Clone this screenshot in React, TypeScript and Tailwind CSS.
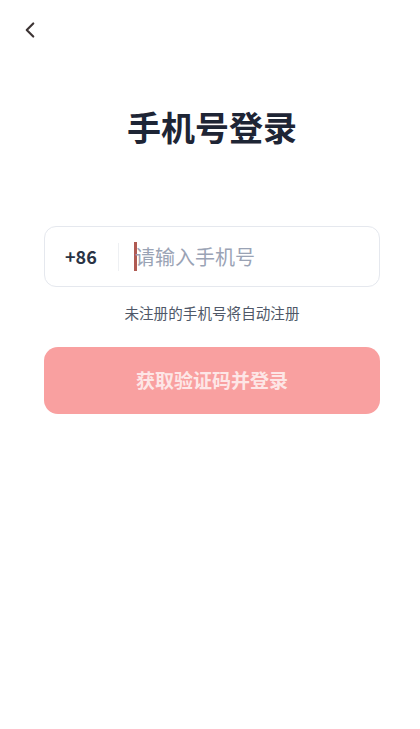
import { ChevronLeft } from 'lucide-react'

export default function App() {
  return (
    <div
      className="min-h-[729px] w-full bg-white"
      style={{ fontFamily: '"Noto Sans CJK SC", "Noto Sans", sans-serif' }}
    >
      {/* Header */}
      <div className="flex h-[60px] items-center px-[16px]">
        <button className="flex h-[28px] w-[28px] items-center justify-center text-[#3d3434]">
          <ChevronLeft size={26} strokeWidth={2} />
        </button>
      </div>

      {/* Title */}
      <h1 className="mt-[43px] pl-[4px] text-center text-[34px] font-bold leading-[48px] text-[#1e2535]">
        手机号登录
      </h1>

      <div className="mt-[75px] pl-[44px] pr-[40px]">
        {/* Phone input */}
        <div className="flex h-[61px] items-center rounded-[12px] border border-[#e5e8ee] bg-white">
          <span className="w-[73px] pl-[20px] text-[18px] font-semibold text-[#2a3345]">+86</span>
          <span className="h-[28px] w-px bg-[#eef0f3]" />
          <div className="ml-[15px] flex flex-1 items-center">
            <span className="h-[29px] w-[3px] bg-[#b05a52]" />
            <input
              className="ml-[-2px] w-full bg-transparent text-[20px] text-[#2a3345] outline-none placeholder:text-[#9aa3b5]"
              placeholder="请输入手机号"
            />
          </div>
        </div>

        <p className="mt-[16px] text-center text-[14.6px] leading-[20px] text-[#4f5868]">
          未注册的手机号将自动注册
        </p>

        <button className="mt-[24px] flex h-[67px] w-full items-center justify-center rounded-[14px] bg-[#f9a0a0] text-[19px] font-bold text-[#fde6e6]">
          获取验证码并登录
        </button>
      </div>
    </div>
  )
}
